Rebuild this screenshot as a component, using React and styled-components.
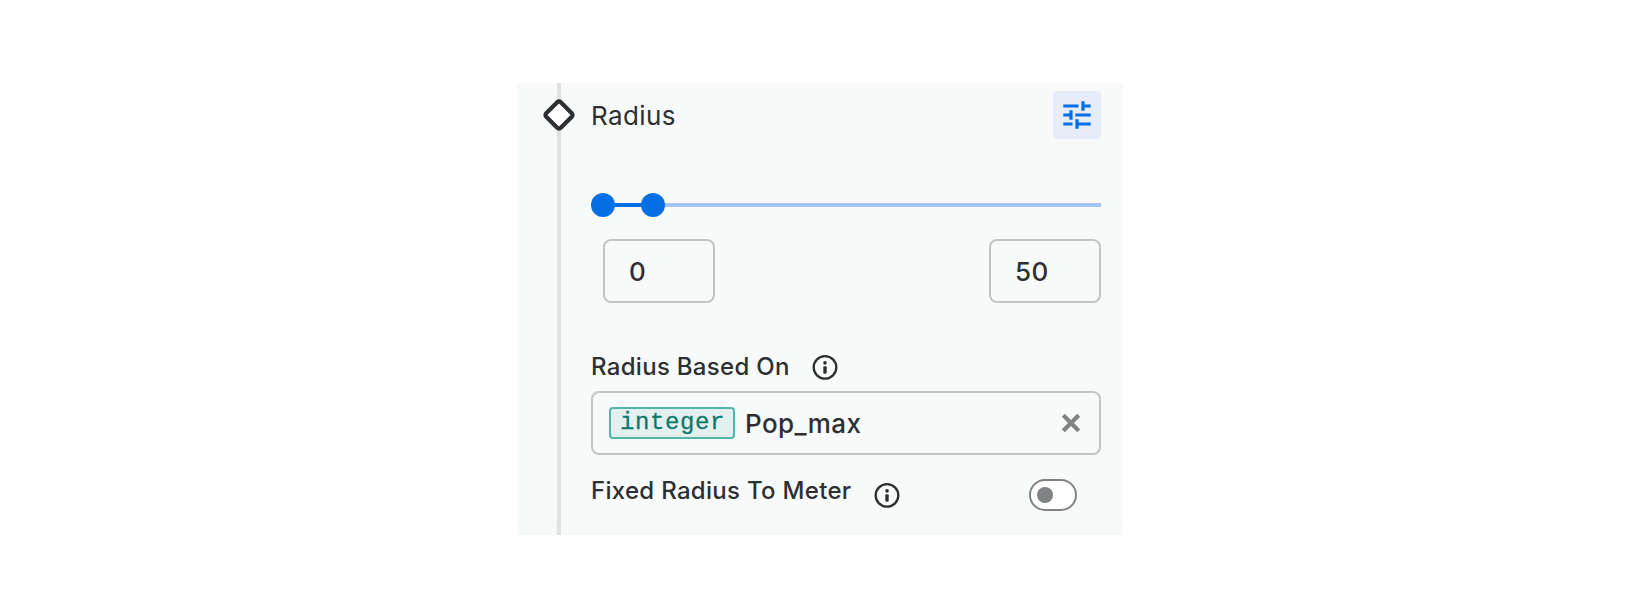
import React from 'react';
import styled, { createGlobalStyle } from 'styled-components';

const Global = createGlobalStyle`
  *, *::before, *::after { box-sizing: border-box; }
  body { margin: 0; background: #fff; font-family: Inter, sans-serif; color: #2d2f33; }
`;

const Page = styled.main`
  display: flex;
  justify-content: center;
  padding-top: 83px;
`;

const Panel = styled.section`
  display: flex;
  width: 606px;
  height: 452px;
  background: linear-gradient(#f8faf9 0 437px, #f7f9f8 437px);
`;

const Rail = styled.div`
  position: relative;
  flex: none;
  width: 4px;
  margin-left: 40px;
  background: #dee1e0;
`;

const Marker = styled.svg`
  position: absolute;
  left: -14px;
  top: 16px;
`;

const Content = styled.div`
  display: flex;
  flex-direction: column;
  width: 510px;
  margin-left: 30px;
  padding-top: 8px;
`;

const Header = styled.header`
  display: flex;
  align-items: center;
  justify-content: space-between;
  height: 48px;
`;

const Title = styled.h2`
  margin: 0;
  padding-top: 2px;
  font-size: 26px;
  line-height: 46px;
  font-weight: 400;
  letter-spacing: 0.4px;
`;

const TuneButton = styled.button`
  display: grid;
  place-items: center;
  width: 48px;
  height: 48px;
  padding: 0;
  border: 0;
  border-radius: 4px;
  background: #e6edf8;
`;

const Slider = styled.div`
  display: flex;
  align-items: center;
  height: 24px;
  margin-top: 54px;
`;

const Thumb = styled.span`
  width: 24px;
  height: 24px;
  border-radius: 50%;
  background: #046fe5;
`;

const Track = styled.span`
  flex: ${(p) => (p.$active ? '0 0 26px' : '1')};
  height: 4px;
  background: ${(p) => (p.$active ? '#046fe5' : '#a4c5f4')};
`;

const Range = styled.div`
  display: flex;
  justify-content: space-between;
  margin: 22px 0 0 12px;
`;

const NumberBox = styled.div`
  width: 112px;
  height: 64px;
  padding-left: 24px;
  border: 2px solid #c3c5c4;
  border-radius: 8px;
  font-size: 26px;
  line-height: 61px;
  font-weight: 500;
  letter-spacing: 0.4px;
`;

const Label = styled.div`
  display: flex;
  align-items: center;
  height: 32px;
  margin-top: ${(p) => p.$top}px;
  font-size: 24px;
  line-height: 32px;
  font-weight: 500;
  letter-spacing: 0.3px;
`;

const Select = styled.div`
  display: flex;
  align-items: center;
  height: 64px;
  margin-top: 8px;
  padding: 0 18px 0 16px;
  border: 2px solid #c3c5c4;
  border-radius: 8px;
`;

const TypeTag = styled.span`
  width: 126px;
  height: 32px;
  padding-left: 9px;
  border: 2px solid #51b5aa;
  border-radius: 4px;
  background: #e4f0ef;
  color: #0b7a6c;
  font-family: "Liberation Mono", monospace;
  font-size: 24px;
  line-height: 27px;
  letter-spacing: 0.6px;
  -webkit-text-stroke: 0.3px #0b7a6c;
`;

const Value = styled.span`
  flex: 1;
  margin-left: 10px;
  padding-top: 2px;
  font-size: 26px;
  line-height: 58px;
  font-weight: 500;
  letter-spacing: 0.4px;
`;

const Row = styled.div`
  display: flex;
  align-items: center;
  height: 32px;
  margin-top: 24px;
  padding-right: 24px;
`;

const Toggle = styled.span`
  display: flex;
  align-items: center;
  width: 48px;
  height: 32px;
  margin-left: auto;
  padding-left: 6px;
  border: 2px solid #808383;
  border-radius: 16px;
  background: #fff;
`;

const Knob = styled.span`
  width: 16px;
  height: 16px;
  border-radius: 50%;
  background: #808383;
`;

const InfoSvg = styled.svg`
  flex: none;
  margin-left: ${(p) => p.$gap}px;
`;

const InfoIcon = ({ gap }) => (
  <InfoSvg $gap={gap} width="26" height="26" viewBox="0 0 26 26">
    <circle cx="13" cy="13.4" r="11.3" fill="none" stroke="#2d2f33" strokeWidth="2.3" />
    <circle cx="13" cy="8.9" r="1.8" fill="#2d2f33" />
    <rect x="11.3" y="12.2" width="3.4" height="7.5" rx="1" fill="#2d2f33" />
  </InfoSvg>
);

export default function App() {
  return (
    <>
      <Global />
      <Page>
        <Panel>
          <Rail>
            <Marker width="32" height="32" viewBox="0 0 32 32">
              <rect x="5.7" y="5.7" width="20.6" height="20.6" rx="2.5" transform="rotate(45 16 16)" fill="#fff" stroke="#2d2f33" strokeWidth="4.2" />
            </Marker>
          </Rail>
          <Content>
            <Header>
              <Title>Radius</Title>
              <TuneButton aria-label="Adjust">
                <svg width="28" height="28" viewBox="0 0 28 28" fill="none" stroke="#046fe5" strokeWidth="3.2">
                  <path d="M0.3 5H15.5M20 0.2V9.8M20 5H27.7M0.3 14H8M8 9.2V18.8M12.3 14H27.7M0.3 23H9.5M14 18.2V27.8M14 23H27.7" />
                </svg>
              </TuneButton>
            </Header>
            <Slider>
              <Thumb />
              <Track $active />
              <Thumb />
              <Track />
            </Slider>
            <Range>
              <NumberBox>0</NumberBox>
              <NumberBox>50</NumberBox>
            </Range>
            <Label $top={48}>
              Radius Based On
              <InfoIcon gap={22} />
            </Label>
            <Select>
              <TypeTag>integer</TypeTag>
              <Value>Pop_max</Value>
              <svg width="20" height="20" viewBox="0 0 20 20" stroke="#808383" strokeWidth="4.2">
                <path d="M2.3 2.3L17.7 17.7M17.7 2.3L2.3 17.7" />
              </svg>
            </Select>
            <Row>
              <Label $top={-9}>Fixed Radius To Meter</Label>
              <InfoIcon gap={23} />
              <Toggle>
                <Knob />
              </Toggle>
            </Row>
          </Content>
        </Panel>
      </Page>
    </>
  );
}
